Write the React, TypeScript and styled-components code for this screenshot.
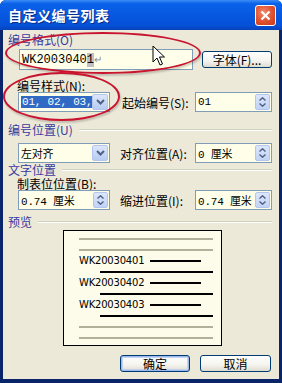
import React from 'react';
import styled, { createGlobalStyle } from 'styled-components';

const GlobalStyle = createGlobalStyle`
  html, body {
    margin: 0;
    padding: 0;
    background: #ffffff;
  }
  body {
    font-family: 'Noto Sans CJK SC', 'DejaVu Sans', sans-serif;
    font-size: 12px;
  }
`;

const CJK = `'Noto Sans CJK SC', 'Liberation Sans', sans-serif`;

const Window = styled.div`
  position: relative;
  width: 282px;
  height: 383px;
  box-sizing: border-box;
  background: #0a246a;
  border-radius: 6px 6px 0 0;
  overflow: hidden;
  display: flex;
  flex-direction: column;
`;

const TitleBar = styled.div`
  height: 30px;
  flex: none;
  display: flex;
  align-items: center;
  justify-content: space-between;
  padding: 0 6px 0 8px;
  background: linear-gradient(
    #3d8df6 0%,
    #0a62e8 12%,
    #0757e0 50%,
    #0551d8 85%,
    #0842b8 100%
  );
`;

const Title = styled.span`
  color: #ffffff;
  font-family: ${CJK};
  font-weight: 700;
  font-size: 14px;
  letter-spacing: 0.5px;
  text-shadow: 1px 1px 0 #0b2d85;
`;

const CloseButton = styled.div`
  width: 19px;
  height: 19px;
  border: 1px solid #ffffff;
  border-radius: 3px;
  background: radial-gradient(circle at 40% 35%, #f08a6c 0%, #e0502e 55%, #c8391c 100%);
  display: flex;
  align-items: center;
  justify-content: center;
`;

const Body = styled.div`
  flex: 1;
  margin: 0 3px 4px 3px;
  background: #ece9d8;
  padding: 3px 7px 0 5px;
  display: flex;
  flex-direction: column;
`;

const GroupHeader = styled.div<{ top: number }>`
  display: flex;
  align-items: center;
  gap: 6px;
  height: 14px;
  flex: none;
  margin-top: ${(p) => p.top}px;
  color: #3a3aa0;
  font-family: ${CJK};
  font-size: 12px;
  line-height: 14px;
  white-space: nowrap;
`;

const Rule = styled.div`
  flex: 1;
  height: 1px;
  background: #d0d0bf;
  border-bottom: 1px solid #ffffff;
`;

const Label = styled.span<{ indent?: number; top?: number }>`
  display: block;
  height: 13px;
  flex: none;
  margin-left: ${(p) => p.indent ?? 0}px;
  margin-top: ${(p) => p.top ?? 0}px;
  font-family: ${CJK};
  font-size: 12px;
  line-height: 13px;
  color: #000000;
  white-space: nowrap;
`;

const Row = styled.div<{ top: number; h?: number }>`
  display: flex;
  align-items: center;
  flex: none;
  margin-top: ${(p) => p.top}px;
  height: ${(p) => p.h ?? 20}px;
`;

const Field = styled.div<{ w: number; h?: number; left?: number }>`
  width: ${(p) => p.w}px;
  height: ${(p) => p.h ?? 20}px;
  margin-left: ${(p) => p.left ?? 0}px;
  box-sizing: border-box;
  border: 1px solid #7f9db9;
  background: #ffffe9;
  display: flex;
  align-items: center;
  flex: none;
`;

const FieldText = styled.span<{ size?: number }>`
  flex: 1;
  min-width: 0;
  padding-left: 2px;
  font-family: 'Liberation Mono', ${CJK};
  font-size: ${(p) => p.size ?? 11}px;
  letter-spacing: ${(p) => (p.size ? 0 : -0.2)}px;
  color: #000000;
  white-space: nowrap;
  overflow: hidden;
`;

const Selected = styled.span`
  background: #316ac5;
  color: #ffffff;
  padding: 0 1px;
`;

const Caret = styled.span`
  background: #c0c0c0;
`;

const ReturnMark = styled.span`
  color: #8a8a8a;
  font-size: 10px;
`;

const DropButton = styled.div`
  width: 16px;
  height: 16px;
  flex: none;
  margin-right: 1px;
  border-radius: 2px;
  background: linear-gradient(#dce6fb, #b8cbf2);
  border: 1px solid #b3c6ef;
  box-sizing: border-box;
  display: flex;
  align-items: center;
  justify-content: center;
`;

const SpinButton = styled.div`
  width: 15px;
  height: 16px;
  flex: none;
  margin-right: 1px;
  border-radius: 2px;
  background: linear-gradient(#dce6fb, #c2d3f5);
  border: 1px solid #b3c6ef;
  box-sizing: border-box;
  display: flex;
  flex-direction: column;
  align-items: center;
  justify-content: center;
  gap: 2px;
`;

const PushButton = styled.div<{ w: number; isDefault?: boolean; left?: number }>`
  width: ${(p) => p.w}px;
  height: 17px;
  margin-left: ${(p) => p.left ?? 0}px;
  box-sizing: border-box;
  border: 1px solid #003c74;
  border-radius: 3px;
  background: linear-gradient(#ffffff 0%, #f4f3ee 60%, #dedbce 100%);
  box-shadow: ${(p) =>
    p.isDefault ? 'inset 0 0 0 1px #9db9eb, inset 0 0 0 2px #c3d4f3' : 'none'};
  display: flex;
  align-items: center;
  justify-content: center;
  font-family: ${CJK};
  font-size: 12px;
  color: #000000;
  flex: none;
`;

const SideLabel = styled.span<{ left: number; w: number }>`
  margin-left: ${(p) => p.left}px;
  width: ${(p) => p.w}px;
  flex: none;
  font-family: ${CJK};
  font-size: 12px;
  color: #000000;
  white-space: nowrap;
`;

const Preview = styled.div`
  width: 159px;
  height: 116px;
  flex: none;
  margin: 1px 0 0 55px;
  box-sizing: border-box;
  border: 1px solid #000000;
  background: #fdfbe9;
  padding: 2px 8px 0 15px;
  display: flex;
  flex-direction: column;
`;

const PreviewLine = styled.div<{ indent?: number; dark?: boolean }>`
  height: 11px;
  flex: none;
  display: flex;
  align-items: center;
  padding-left: ${(p) => p.indent ?? 0}px;

  &::after {
    content: '';
    flex: 1;
    height: 2px;
    background: ${(p) => (p.dark ? '#000000' : '#b3b09a')};
  }
`;

const PreviewItem = styled.div`
  height: 11px;
  flex: none;
  display: flex;
  align-items: center;
  font-family: 'DejaVu Sans', sans-serif;
  font-size: 10px;
  letter-spacing: -0.2px;
  color: #000000;
`;

const ItemBar = styled.div`
  width: 51px;
  height: 2px;
  margin-left: 6px;
  background: #000000;
`;

const Footer = styled.div`
  display: flex;
  justify-content: flex-end;
  margin-top: 9px;
  padding-right: 1px;
`;

const Ellipse = styled.div<{ x: number; y: number; w: number; h: number }>`
  position: absolute;
  left: ${(p) => p.x}px;
  top: ${(p) => p.y}px;
  width: ${(p) => p.w}px;
  height: ${(p) => p.h}px;
  box-sizing: border-box;
  border: 2px solid #c8142f;
  border-radius: 50% / 50%;
  box-shadow: 1px 2px 2px rgba(0, 0, 0, 0.18);
  pointer-events: none;
`;

const Pointer = styled.svg`
  position: absolute;
  left: 152px;
  top: 45px;
`;

const ChevronDown = () => (
  <svg width="9" height="6" viewBox="0 0 9 6">
    <path d="M1 1 L4.5 4.5 L8 1" fill="none" stroke="#4d6185" strokeWidth="2" />
  </svg>
);

const Spinner = () => (
  <SpinButton>
    <svg width="7" height="4" viewBox="0 0 7 4">
      <path d="M0.5 3.5 L3.5 0.8 L6.5 3.5" fill="none" stroke="#4d6185" strokeWidth="1.4" />
    </svg>
    <svg width="7" height="4" viewBox="0 0 7 4">
      <path d="M0.5 0.5 L3.5 3.2 L6.5 0.5" fill="none" stroke="#4d6185" strokeWidth="1.4" />
    </svg>
  </SpinButton>
);

const previewItems = ['WK20030401', 'WK20030402', 'WK20030403'];

export default function App() {
  return (
    <>
      <GlobalStyle />
      <Window>
        <TitleBar>
          <Title>自定义编号列表</Title>
          <CloseButton>
            <svg width="11" height="11" viewBox="0 0 11 11">
              <path d="M1.5 1.5 L9.5 9.5 M9.5 1.5 L1.5 9.5" stroke="#ffffff" strokeWidth="2.2" />
            </svg>
          </CloseButton>
        </TitleBar>
        <Body>
          <GroupHeader top={0}>编号格式(O)</GroupHeader>
          <Row top={2} h={21}>
            <Field w={174} h={21} left={11}>
              <FieldText size={12}>
                WK2003040<Caret>1</Caret>
                <ReturnMark>↵</ReturnMark>
              </FieldText>
            </Field>
            <PushButton w={70} left={9}>
              字体(F)...
            </PushButton>
          </Row>
          <Label indent={9} top={9}>
            编号样式(N):
          </Label>
          <Row top={0}>
            <Field w={92} left={10}>
              <FieldText>
                <Selected>01, 02, 03,</Selected>
              </FieldText>
              <DropButton>
                <ChevronDown />
              </DropButton>
            </Field>
            <SideLabel left={12} w={73}>
              起始编号(S):
            </SideLabel>
            <Field w={77}>
              <FieldText>01</FieldText>
              <Spinner />
            </Field>
          </Row>
          <GroupHeader top={11}>
            编号位置(U)
            <Rule />
          </GroupHeader>
          <Row top={6}>
            <Field w={92} left={10}>
              <FieldText>左对齐</FieldText>
              <DropButton>
                <ChevronDown />
              </DropButton>
            </Field>
            <SideLabel left={10} w={75}>
              对齐位置(A):
            </SideLabel>
            <Field w={77}>
              <FieldText>0 厘米</FieldText>
              <Spinner />
            </Field>
          </Row>
          <GroupHeader top={0}>
            文字位置
            <Rule />
          </GroupHeader>
          <Label indent={9} top={0}>
            制表位位置(B):
          </Label>
          <Row top={0}>
            <Field w={92} left={10}>
              <FieldText>0.74 厘米</FieldText>
              <Spinner />
            </Field>
            <SideLabel left={10} w={75}>
              缩进位置(I):
            </SideLabel>
            <Field w={77}>
              <FieldText>0.74 厘米</FieldText>
              <Spinner />
            </Field>
          </Row>
          <GroupHeader top={5}>
            预览
            <Rule />
          </GroupHeader>
          <Preview>
            <PreviewLine />
            <PreviewLine />
            {previewItems.map((item) => (
              <React.Fragment key={item}>
                <PreviewItem>
                  {item}
                  <ItemBar />
                </PreviewItem>
                <PreviewLine indent={21} dark />
              </React.Fragment>
            ))}
            <PreviewLine />
            <PreviewLine />
          </Preview>
          <Footer>
            <PushButton w={70} isDefault>
              确定
            </PushButton>
            <PushButton w={71} left={10}>
              取消
            </PushButton>
          </Footer>
        </Body>
        <Ellipse x={5} y={32} w={196} h={42} />
        <Ellipse x={3} y={72} w={117} h={49} />
        <Pointer width="14" height="22" viewBox="0 0 14 22">
          <path
            d="M1 1 L1 17 L5 13 L8 20 L10.5 19 L7.5 12 L12.5 12 Z"
            fill="#ffffff"
            stroke="#000000"
            strokeWidth="1"
            strokeLinejoin="round"
          />
        </Pointer>
      </Window>
    </>
  );
}
